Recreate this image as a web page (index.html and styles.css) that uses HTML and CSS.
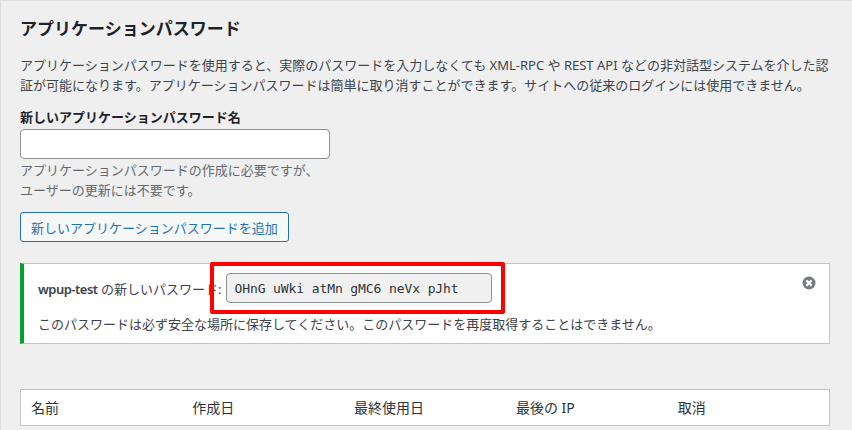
FILE: index.html
```html
<!DOCTYPE html>
<html lang="ja">
<head>
  <meta charset="UTF-8" />
  <title>アプリケーションパスワード</title>
  <link rel="stylesheet" href="styles.css">
</head>
<body>
  <main class="page">
    <h2>アプリケーションパスワード</h2>
    <p class="intro">アプリケーションパスワードを使用すると、実際のパスワードを入力しなくても XML-RPC や REST API などの非対話型システムを介した認証が可能になります。アプリケーションパスワードは簡単に取り消すことができます。サイトへの従来のログインには使用できません。</p>

    <label class="field-label" for="app-name">新しいアプリケーションパスワード名</label>
    <input type="text" id="app-name" class="name-input" />
    <p class="hint">アプリケーションパスワードの作成に必要ですが、<br>ユーザーの更新には不要です。</p>
    <button class="add-button">新しいアプリケーションパスワードを追加</button>

    <!-- 通知 -->
    <div class="notice">
      <div class="notice-row">
        <span><strong>wpup-test</strong> の新しいパスワード:</span>
        <input type="text" class="new-password" value="OHnG uWki atMn gMC6 neVx pJht" readonly />
      </div>
      <p class="notice-text">このパスワードは必ず安全な場所に保存してください。このパスワードを再度取得することはできません。</p>
      <svg class="dismiss" width="14" height="14" viewBox="0 0 14 14">
        <circle cx="7" cy="7" r="6.5" fill="#787c82"/>
        <path d="M4.4 4.4l5.2 5.2M9.600 4.400l-5.200 5.200" stroke="#fff" stroke-width="2.2"/>
      </svg>
      <div class="highlight"></div>
    </div>

    <table class="password-table">
      <thead>
        <tr>
          <th>名前</th>
          <th>作成日</th>
          <th>最終使用日</th>
          <th>最後の IP</th>
          <th>取消</th>
        </tr>
      </thead>
    </table>
  </main>
</body>
</html>
```

FILE: styles.css
```css
* {
  box-sizing: border-box;
  margin: 0;
  padding: 0;
}

html, body {
  height: 430px;
  overflow: hidden;
}

body {
  font-family: "Noto Sans", "Noto Sans CJK JP", sans-serif;
  font-size: 13px;
  color: #3c434a;
  background: #f0f0f1;
}

.page {
  height: 430px;
  padding: 18px 22px 0 19px;
  background: #efefef;
  border-top: 1px solid #dcdcdc;
  border-left: 1px solid #dcdcdc;
}

h2 {
  font-size: 17px;
  line-height: 20px;
  font-weight: 700;
  color: #1d2327;
}

.intro {
  margin-top: 17px;
  line-height: 19.5px;
}

.field-label {
  display: block;
  margin-top: 13px;
  font-weight: 700;
  line-height: 19px;
  color: #1d2327;
}

.name-input {
  display: block;
  width: 310px;
  height: 30px;
  margin-top: 2px;
  background: #fff;
  border: 1px solid #8c8f94;
  border-radius: 4px;
}

.hint {
  margin-top: 2px;
  line-height: 19.5px;
  color: #646970;
}

.add-button {
  display: block;
  height: 30px;
  margin-top: 12px;
  padding: 0 10px;
  font: inherit;
  color: #2271b1;
  background: #f6f7f7;
  border: 1px solid #2271b1;
  border-radius: 3px;
}

.notice {
  position: relative;
  height: 81px;
  margin-top: 21px;
  padding: 9px 12px 0 14px;
  background: #fff;
  border: 1px solid #c3c4c7;
  border-left: 4px solid #00a32a;
}

.notice-row {
  display: flex;
  align-items: center;
  gap: 5px;
}

.notice-row strong {
  font-weight: 600;
  letter-spacing: -0.5px;
}

.new-password {
  width: 266px;
  height: 30px;
  padding: 0 7px;
  font-family: "DejaVu Sans Mono", monospace;
  font-size: 13px;
  letter-spacing: -0.1px;
  color: #2c3338;
  background: #f0f0f1;
  border: 1px solid #8c8f94;
  border-radius: 4px;
}

.notice-text {
  margin-top: 12px;
  line-height: 19px;
}

.dismiss {
  position: absolute;
  top: 12px;
  right: 13px;
}

.highlight {
  position: absolute;
  top: -2px;
  left: 186px;
  width: 295px;
  height: 52px;
  border: 4px solid #f00;
  border-radius: 2px;
}

.password-table {
  width: 100%;
  margin-top: 45px;
  border-collapse: collapse;
  table-layout: fixed;
  background: #fff;
  border: 1px solid #c3c4c7;
}

.password-table th {
  height: 36px;
  padding: 0 10px 2px;
  font-size: 14px;
  font-weight: 400;
  text-align: left;
  color: #2c3338;
  border-bottom: 1px solid #c3c4c7;
}
```
